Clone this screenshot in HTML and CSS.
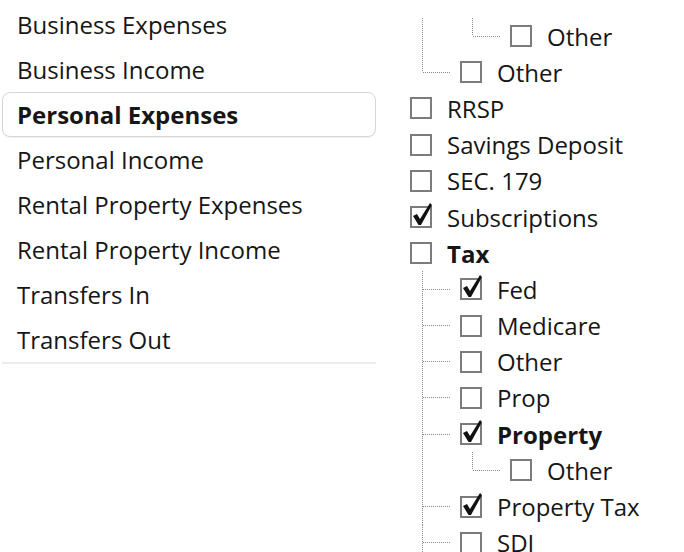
FILE: index.html
```html
<!DOCTYPE html>
<html>
<head>
<meta charset="utf-8">
<link rel="stylesheet" href="styles.css">
</head>
<body>
<div class="page">
  <ul class="cats">
    <li class="cat">Business Expenses</li>
    <li class="cat">Business Income</li>
    <li class="cat selected">Personal Expenses</li>
    <li class="cat">Personal Income</li>
    <li class="cat">Rental Property Expenses</li>
    <li class="cat">Rental Property Income</li>
    <li class="cat">Transfers In</li>
    <li class="cat">Transfers Out</li>
  </ul>
  <div class="tree">
    <div class="row"><span class="g g-pipe"></span><span class="g g-elbow"></span><svg class="cb" viewBox="0 0 22 22"><rect x="1" y="1" width="20" height="20"/></svg><span class="lbl">Other</span></div>
    <div class="row"><span class="g g-elbow"></span><svg class="cb" viewBox="0 0 22 22"><rect x="1" y="1" width="20" height="20"/></svg><span class="lbl">Other</span></div>
    <div class="row"><svg class="cb" viewBox="0 0 22 22"><rect x="1" y="1" width="20" height="20"/></svg><span class="lbl">RRSP</span></div>
    <div class="row"><svg class="cb" viewBox="0 0 22 22"><rect x="1" y="1" width="20" height="20"/></svg><span class="lbl">Savings Deposit</span></div>
    <div class="row"><svg class="cb" viewBox="0 0 22 22"><rect x="1" y="1" width="20" height="20"/></svg><span class="lbl">SEC. 179</span></div>
    <div class="row"><svg class="cb" viewBox="0 0 22 22"><rect x="1" y="1" width="20" height="20"/><path class="tick" d="M3 10 L7 8 L10 13 L20 -3 L22 -1 L11 19 L8.5 19 Z"/></svg><span class="lbl">Subscriptions</span></div>
    <div class="row"><svg class="cb" viewBox="0 0 22 22"><rect x="1" y="1" width="20" height="20"/></svg><span class="lbl bold">Tax</span></div>
    <div class="row"><span class="g g-tee"></span><svg class="cb" viewBox="0 0 22 22"><rect x="1" y="1" width="20" height="20"/><path class="tick" d="M3 10 L7 8 L10 13 L20 -3 L22 -1 L11 19 L8.5 19 Z"/></svg><span class="lbl">Fed</span></div>
    <div class="row"><span class="g g-tee"></span><svg class="cb" viewBox="0 0 22 22"><rect x="1" y="1" width="20" height="20"/></svg><span class="lbl">Medicare</span></div>
    <div class="row"><span class="g g-tee"></span><svg class="cb" viewBox="0 0 22 22"><rect x="1" y="1" width="20" height="20"/></svg><span class="lbl">Other</span></div>
    <div class="row"><span class="g g-tee"></span><svg class="cb" viewBox="0 0 22 22"><rect x="1" y="1" width="20" height="20"/></svg><span class="lbl">Prop</span></div>
    <div class="row"><span class="g g-tee"></span><svg class="cb" viewBox="0 0 22 22"><rect x="1" y="1" width="20" height="20"/><path class="tick" d="M3 10 L7 8 L10 13 L20 -3 L22 -1 L11 19 L8.5 19 Z"/></svg><span class="lbl bold">Property</span></div>
    <div class="row"><span class="g g-pipe"></span><span class="g g-elbow"></span><svg class="cb" viewBox="0 0 22 22"><rect x="1" y="1" width="20" height="20"/></svg><span class="lbl">Other</span></div>
    <div class="row"><span class="g g-tee"></span><svg class="cb" viewBox="0 0 22 22"><rect x="1" y="1" width="20" height="20"/><path class="tick" d="M3 10 L7 8 L10 13 L20 -3 L22 -1 L11 19 L8.5 19 Z"/></svg><span class="lbl">Property Tax</span></div>
    <div class="row"><span class="g g-tee"></span><svg class="cb" viewBox="0 0 22 22"><rect x="1" y="1" width="20" height="20"/></svg><span class="lbl">SDI</span></div>
  </div>
</div>
</body>
</html>
```
FILE: styles.css
```css
html, body {
  margin: 0;
  padding: 0;
  background: #ffffff;
  overflow: hidden;
}

body {
  width: 684px;
  height: 552px;
  font-family: "Open Sans", "Noto Sans", sans-serif;
  font-size: 24px;
  color: #161616;
}

.page {
  display: flex;
  align-items: flex-start;
  padding-left: 2px;
}

.cats {
  list-style: none;
  margin: 0;
  padding: 2px 0 0 0;
  width: 374px;
  border-bottom: 2px solid #ececec;
}

.cat {
  box-sizing: border-box;
  height: 45px;
  line-height: 43px;
  padding-left: 14px;
  border: 1px solid transparent;
  border-radius: 8px;
  white-space: nowrap;
}

.cat.selected {
  font-weight: 700;
  border-color: #d6d6d6;
  box-shadow: 0 1px 1px rgba(0, 0, 0, 0.06);
}

.tree {
  padding: 18px 0 0 34px;
}

.row {
  display: flex;
  align-items: center;
  height: 36.2px;
  white-space: nowrap;
}

.g {
  width: 50px;
  align-self: stretch;
  flex: none;
}

.g-pipe {
  background: repeating-linear-gradient(to bottom, #8a8a8a 0 1px, transparent 1px 2px) 12px 0 / 1px 100% no-repeat;
}

.g-tee {
  background:
    repeating-linear-gradient(to bottom, #8a8a8a 0 1px, transparent 1px 2px) 12px 0 / 1px 100% no-repeat,
    repeating-linear-gradient(to right, #8a8a8a 0 1px, transparent 1px 2px) 13px 50% / 28px 1px no-repeat;
}

.g-elbow {
  background:
    repeating-linear-gradient(to bottom, #8a8a8a 0 1px, transparent 1px 2px) 12px 0 / 1px 50% no-repeat,
    repeating-linear-gradient(to right, #8a8a8a 0 1px, transparent 1px 2px) 13px 50% / 28px 1px no-repeat;
}

.cb {
  width: 22px;
  height: 22px;
  flex: none;
  overflow: visible;
}

.cb rect {
  fill: #ffffff;
  stroke: #7c7c7c;
  stroke-width: 2;
}

.cb .tick {
  fill: #111111;
}

.lbl {
  margin-left: 15px;
}

.bold {
  font-weight: 700;
}
```
